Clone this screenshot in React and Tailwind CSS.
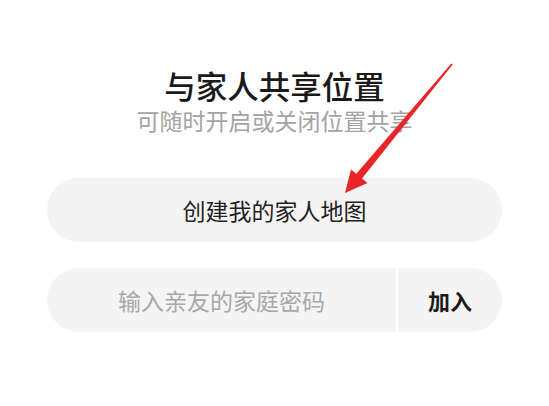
export default function App() {
    return (
        <div
            className="relative w-[549px] h-[406px] bg-white overflow-hidden"
            style={{ fontFamily: '"Noto Sans CJK SC", "Noto Sans", sans-serif' }}
        >
            <div className="flex flex-col items-center px-[47px] pt-[69px]">
                <h1 className="text-[31.5px] leading-[32px] font-medium text-[#1a1a1a]">
                    与家人共享位置
                </h1>
                <p className="mt-[7px] text-[23px] leading-[25px] text-[#a3a3a3]">
                    可随时开启或关闭位置共享
                </p>

                <button className="mt-[45px] w-full h-16 rounded-full bg-[#f4f4f4] text-[23px] text-[#1f1f1f]">
                    创建我的家人地图
                </button>

                <div className="mt-[26px] w-full h-16 flex rounded-full bg-[#f4f4f4] overflow-hidden">
                    <div className="flex-1 flex items-center justify-center text-[23px] text-[#a8a8a8]">
                        输入亲友的家庭密码
                    </div>
                    <div className="w-[2px] bg-white" />
                    <div className="w-[104px] flex items-center justify-center text-[22px] font-bold text-[#1a1a1a]">
                        加入
                    </div>
                </div>
            </div>

            <svg
                className="absolute left-0 top-0 pointer-events-none"
                width="549"
                height="406"
                viewBox="0 0 549 406"
            >
                <polygon
                    points="345,193 351,169.4 356.3,173.8 451.3,63.4 452.7,64.6 362,178.6 367.5,183"
                    fill="#e8262a"
                />
            </svg>
        </div>
    );
}
